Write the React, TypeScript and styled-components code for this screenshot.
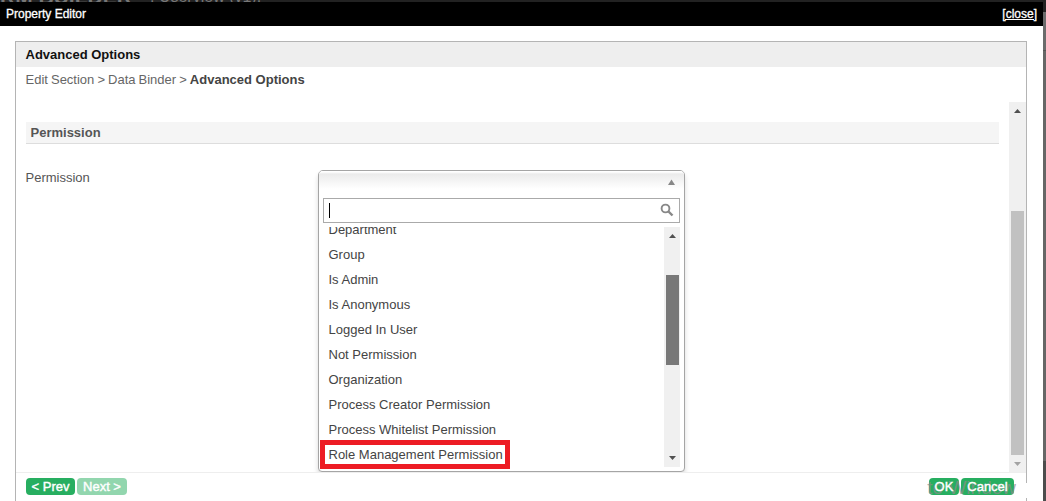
import React from "react";
import styled, { createGlobalStyle } from "styled-components";

const GlobalStyle = createGlobalStyle`
  * { box-sizing: border-box; }
  body { margin: 0; overflow: hidden; background: #666; font-family: "Liberation Sans", Arial, sans-serif; font-size: 13px; }
`;

const Screen = styled.div`
  width: 1046px;
  height: 501px;
  overflow: hidden;
  background: linear-gradient(#222 0 12px, #6b6b6b 12px 50px, #555 50px 51px, #666 51px 461px, #4c4c4c 461px);
`;
const Backdrop = styled.div`
  height: 2px;
  overflow: hidden;
  background: #222;
  color: #777;
  display: flex;
  align-items: flex-end;
  gap: 12px;
  white-space: nowrap;
`;
const AppName = styled.span`
  font-size: 21px;
  font-weight: bold;
  line-height: 11px;
  width: 138px;
`;
const AppVersion = styled.span`
  font-size: 16px;
  line-height: 10px;
`;
const Modal = styled.div`
  width: 1043px;
  height: 499px;
  background: #fff;
  display: flex;
  flex-direction: column;
`;
const TitleBar = styled.header`
  flex: none;
  height: 24px;
  padding: 0 6px 0 6px;
  background: #000;
  color: #fff;
  font-size: 12px;
  line-height: 24px;
  display: flex;
  justify-content: space-between;
`;
const Title = styled.span`
  -webkit-text-stroke: 0.3px #fff;
`;
const Close = styled.a`
  -webkit-text-stroke: 0.3px #fff;
  text-decoration: underline;
`;
const Panel = styled.section`
  margin: 15px 16px 0 15px;
  flex: 1;
  border: 1px solid #b4b4b4;
  border-bottom: 0;
  display: flex;
  flex-direction: column;
`;
const PanelTitle = styled.h1`
  margin: 0;
  height: 25px;
  padding-left: 9.5px;
  background: #eee;
  color: #111;
  font-size: 13px;
  line-height: 26px;
`;
const Breadcrumb = styled.nav`
  height: 35px;
  padding-left: 9.5px;
  line-height: 26px;
  color: #666;
  word-spacing: -0.55px;
  b { color: #444; word-spacing: 0; }
`;
const Content = styled.div`
  height: 370px;
  display: flex;
`;
const Form = styled.div`
  position: relative;
  flex: 1;
  padding: 20px 10px 0;
`;
const SectionTitle = styled.h2`
  margin: 0;
  height: 22px;
  padding-left: 4.5px;
  background: #f5f5f5;
  border-bottom: 1px solid #ddd;
  color: #555;
  font-size: 13px;
  line-height: 22px;
`;
const Label = styled.label`
  display: block;
  margin: 24px 0 0 -0.5px;
  line-height: 20px;
  color: #555;
`;
const Scrollbar = styled.div<{ $width: number; $start: number; $size: number; $thumb: string }>`
  flex: none;
  width: ${(p) => p.$width}px;
  background: #f0f0f0;
  display: flex;
  flex-direction: column;
  align-items: center;
  &::before { content: ""; flex: none; height: ${(p) => p.$start}px; order: 1; }
  > i { flex: none; order: 2; width: 13px; height: ${(p) => p.$size}px; background: ${(p) => p.$thumb}; }
  > svg:first-child { flex: none; order: 0; }
  > svg:last-child { flex: none; order: 3; margin-top: auto; }
`;
const Dropdown = styled.div`
  position: absolute;
  left: 302px;
  top: 68px;
  width: 367px;
  height: 302px;
  border: 1px solid #a5a5a5;
  border-radius: 5px 5px 4px 4px;
  background: #fff;
  box-shadow: 0 4px 5px rgba(0, 0, 0, 0.15);
  clip-path: inset(0 -8px 0 -8px);
  display: flex;
  flex-direction: column;
  z-index: 1;
`;
const Selected = styled.div`
  flex: none;
  height: 27px;
  padding: 8px 8px 0 0;
  border-radius: 4px 4px 0 0;
  background: linear-gradient(#fff 1px, #ebebeb 3px, #fff 18px);
  display: flex;
  justify-content: flex-end;
`;
const Search = styled.div`
  flex: none;
  height: 25px;
  margin: 0 4px;
  border: 1px solid #aaa;
  padding: 4px 5px;
  display: flex;
  justify-content: space-between;
`;
const Caret = styled.span`
  width: 1px;
  height: 15px;
  background: #000;
`;
const Results = styled.div`
  height: 240px;
  margin: 4px 4px 0;
  display: flex;
`;
const Options = styled.ul`
  flex: 1;
  margin: 0;
  padding: 0 0 0 5.5px;
  list-style: none;
  overflow: hidden;
  display: flex;
  flex-direction: column;
  justify-content: flex-end;
`;
const Option = styled.li`
  flex: none;
  height: 25px;
  line-height: 25px;
  color: #444;
`;
const Highlight = styled.span`
  position: absolute;
  left: 1px;
  top: 269px;
  width: 190px;
  height: 29px;
  border: 5px solid #ed1c24;
`;
const Footer = styled.footer`
  position: relative;
  flex: 1;
  border-top: 1px solid #eee;
  padding: 5px 12px 0 10px;
  display: flex;
  gap: 2px;
`;
const Button = styled.button<{ $width: number; $faded?: boolean }>`
  width: ${(p) => p.$width}px;
  height: 17px;
  padding: 0;
  border: 0;
  border-radius: 4px;
  background: #27ae60;
  color: #fff;
  opacity: ${(p) => (p.$faded ? 0.5 : 1)};
  font: 13px/17px "Liberation Sans", Arial, sans-serif;
  -webkit-text-stroke: 0.4px #fff;
  white-space: nowrap;
`;
const ButtonText = styled.span`
  position: relative;
  z-index: 1;
`;
const Spacer = styled.span`
  flex: 1;
`;
const Watermark = styled.span`
  position: absolute;
  right: 10px;
  top: 4px;
  font-size: 19px;
  line-height: 22px;
  color: rgba(140, 140, 140, 0.72);
  pointer-events: none;
`;
const BorderGap = styled.span`
  position: absolute;
  right: -1px;
  top: 10px;
  width: 1px;
  height: 15px;
  background: #fff;
`;

const Arrow = ({ down, color = "#505050" }: { down?: boolean; color?: string }) => (
  <svg width="9" height="18" viewBox="0 0 9 18">
    <path d={down ? "M1 7h7L4.5 11z" : "M1 11h7L4.5 7z"} fill={color} />
  </svg>
);

const options = [
  "Department",
  "Group",
  "Is Admin",
  "Is Anonymous",
  "Logged In User",
  "Not Permission",
  "Organization",
  "Process Creator Permission",
  "Process Whitelist Permission",
  "Role Management Permission",
];

export default function App() {
  return (
    <Screen>
      <GlobalStyle />
      <Backdrop>
        <AppName>RM BUILDER</AppName>
        <AppVersion>: Userview (v1);</AppVersion>
      </Backdrop>
      <Modal>
        <TitleBar>
          <Title>Property Editor</Title>
          <Close>[close]</Close>
        </TitleBar>
        <Panel>
          <PanelTitle>Advanced Options</PanelTitle>
          <Breadcrumb>
            Edit Section &gt; Data Binder &gt; <b>Advanced Options</b>
          </Breadcrumb>
          <Content>
            <Form>
              <SectionTitle>Permission</SectionTitle>
              <Label>Permission</Label>
              <Dropdown>
                <Selected>
                  <svg width="9" height="7" viewBox="0 0 9 7">
                    <path d="M1 6h7L4.5 0.5z" fill="#888" />
                  </svg>
                </Selected>
                <Search>
                  <Caret />
                  <svg width="14" height="14" viewBox="0 0 14 14" fill="none" stroke="#888">
                    <circle cx="5.5" cy="5.5" r="3.9" strokeWidth="1.9" />
                    <path d="M8.5 8.5l4 4" strokeWidth="2.4" />
                  </svg>
                </Search>
                <Results>
                  <Options>
                    {options.map((name) => (
                      <Option key={name}>{name}</Option>
                    ))}
                  </Options>
                  <Scrollbar $width={16} $start={30} $size={90} $thumb="#787878">
                    <Arrow />
                    <i />
                    <Arrow down />
                  </Scrollbar>
                </Results>
                <Highlight />
              </Dropdown>
            </Form>
            <Scrollbar $width={17} $start={91} $size={244} $thumb="#c1c1c1">
              <Arrow />
              <i />
              <Arrow down color="#a3a3a3" />
            </Scrollbar>
          </Content>
          <Footer>
            <Button $width={49}>&lt; Prev</Button>
            <Button $width={50} $faded>Next &gt;</Button>
            <Spacer />
            <Button $width={30}><ButtonText>OK</ButtonText></Button>
            <Button $width={53}><ButtonText>Cancel</ButtonText></Button>
            <Watermark>to Window</Watermark>
            <BorderGap />
          </Footer>
        </Panel>
      </Modal>
    </Screen>
  );
}
